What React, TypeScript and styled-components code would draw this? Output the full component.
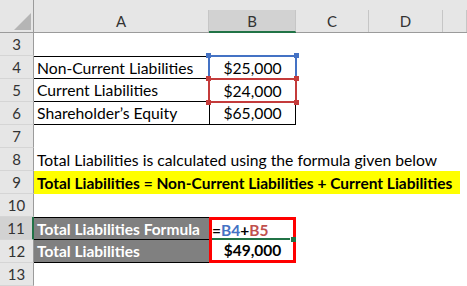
import styled, { createGlobalStyle } from 'styled-components';

const GlobalStyle = createGlobalStyle`
  html, body {
    margin: 0;
    padding: 0;
    background: #fff;
  }
  body {
    font-family: Lato, "Liberation Sans", sans-serif;
    overflow: hidden;
  }
`;

const Sheet = styled.div`
  display: grid;
  grid-template-columns: 34px 175px 87px 73px 74px 24px;
  grid-template-rows: 33px repeat(11, 23px);
  width: 467px;
  height: 286px;
  overflow: hidden;
  font-size: 15.7px;
  color: #000;
`;

const Corner = styled.div`
  background: #e6e6e6;
  border-bottom: 1px solid #9b9b9b;
  border-right: 1px solid #9b9b9b;
  display: flex;
  align-items: flex-end;
  justify-content: flex-end;
  padding: 0 2px 2px 0;
  box-sizing: border-box;
`;

const ColHeader = styled.div<{ $selected?: boolean }>`
  background: #e6e6e6;
  padding-top: 10px;
  box-sizing: border-box;
  border-bottom: 1px solid ${(p) => (p.$selected ? '#217346' : '#9b9b9b')};
`;

const ColLabel = styled.div<{ $selected?: boolean }>`
  height: 100%;
  box-sizing: border-box;
  display: flex;
  align-items: center;
  justify-content: center;
  font-size: 15px;
  color: #333;
  border-right: 1px solid #c6c6c6;
  background: ${(p) => (p.$selected ? '#d2d2d2' : 'transparent')};
  border-bottom: ${(p) => (p.$selected ? '1px solid #217346' : 'none')};
`;

const RowHeader = styled.div<{ $selected?: boolean }>`
  background: ${(p) => (p.$selected ? '#d2d2d2' : '#e6e6e6')};
  border-right: ${(p) => (p.$selected ? '2px solid #217346' : '1px solid #9b9b9b')};
  border-bottom: 1px solid #d5d5d5;
  box-sizing: border-box;
  display: flex;
  align-items: center;
  justify-content: center;
  font-size: 15px;
  color: #333;
`;

type CellProps = {
  $fill?: string;
  $bold?: boolean;
  $align?: 'left' | 'center';
  $ink?: string;
  $span?: number;
  $pad?: number;
  $bt?: string;
  $br?: string;
  $bb?: string;
  $bl?: string;
};

const Cell = styled.div<CellProps>`
  position: relative;
  box-sizing: border-box;
  display: flex;
  align-items: center;
  justify-content: ${(p) => (p.$align === 'center' ? 'center' : 'flex-start')};
  padding: 0 ${(p) => p.$pad ?? 3}px;
  white-space: nowrap;
  background: ${(p) => p.$fill || '#fff'};
  color: ${(p) => p.$ink || '#000'};
  font-weight: ${(p) => (p.$bold ? 700 : 400)};
  font-size: ${(p) => (p.$bold ? '15.5px' : 'inherit')};
  grid-column: span ${(p) => p.$span || 1};
  border-top: ${(p) => p.$bt || 'none'};
  border-right: ${(p) => p.$br || 'none'};
  border-bottom: ${(p) => p.$bb || 'none'};
  border-left: ${(p) => p.$bl || 'none'};
`;

const Banner = styled.div`
  width: 423px;
  margin-left: -3px;
  padding-left: 3px;
  height: 100%;
  display: flex;
  align-items: center;
  background: #ffff00;
  font-weight: 700;
  font-size: 15.5px;
`;

const RangeBox = styled.div<{ $color: string }>`
  position: absolute;
  z-index: 2;
  left: -1px;
  right: -1px;
  top: -1px;
  bottom: -1px;
  border: 2px solid ${(p) => p.$color};
  pointer-events: none;
`;

const Handle = styled.span<{ $color: string; $x: 'l' | 'r'; $y: 't' | 'b' }>`
  position: absolute;
  width: 5px;
  height: 5px;
  background: ${(p) => p.$color};
  ${(p) => (p.$x === 'l' ? 'left: -4px;' : 'right: -4px;')}
  ${(p) => (p.$y === 't' ? 'top: -4px;' : 'bottom: -4px;')}
`;

const ActiveLine = styled.div`
  position: absolute;
  left: 0;
  right: 3px;
  bottom: 0;
  height: 2px;
  background: #217346;
`;

const FillHandle = styled.span`
  position: absolute;
  z-index: 3;
  right: -3px;
  bottom: -2px;
  width: 5px;
  height: 5px;
  background: #217346;
`;

const Ref = styled.span<{ $ink: string }>`
  color: ${(p) => p.$ink};
`;

const BLACK = '1px solid #000';
const RED = '3px solid #ff0000';
const BLUE_RANGE = '#4472c4';
const RED_RANGE = '#c43b3b';

const columns = ['A', 'B', 'C', 'D', ''];

const Empty = ({ n }: { n: number }) => (
  <>
    {Array.from({ length: n }).map((_, i) => (
      <Cell key={i} />
    ))}
  </>
);

const App = () => {
  return (
    <>
      <GlobalStyle />
      <Sheet>
        <Corner>
          <svg width="17" height="17" viewBox="0 0 17 17">
            <polygon points="17,0 17,17 0,17" fill="#b5b5b5" />
          </svg>
        </Corner>
        {columns.map((c) => (
          <ColHeader key={c || 'E'} $selected={c === 'B'}>
            <ColLabel $selected={c === 'B'}>{c}</ColLabel>
          </ColHeader>
        ))}

        <RowHeader>3</RowHeader>
        <Empty n={5} />

        <RowHeader>4</RowHeader>
        <Cell $bt={BLACK} $bb={BLACK}>Non-Current Liabilities</Cell>
        <Cell $align="center">
          $25,000
          <RangeBox $color={BLUE_RANGE}>
            <Handle $color={BLUE_RANGE} $x="l" $y="t" />
            <Handle $color={BLUE_RANGE} $x="r" $y="t" />
          </RangeBox>
        </Cell>
        <Empty n={3} />

        <RowHeader>5</RowHeader>
        <Cell $bb={BLACK}>Current Liabilities</Cell>
        <Cell $align="center">
          $24,000
          <RangeBox $color={RED_RANGE}>
            <Handle $color={RED_RANGE} $x="l" $y="t" />
            <Handle $color={RED_RANGE} $x="r" $y="t" />
            <Handle $color={RED_RANGE} $x="l" $y="b" />
            <Handle $color={RED_RANGE} $x="r" $y="b" />
          </RangeBox>
        </Cell>
        <Empty n={3} />

        <RowHeader>6</RowHeader>
        <Cell $bb={BLACK}>Shareholder’s Equity</Cell>
        <Cell $align="center" $bl={BLACK} $br={BLACK} $bb={BLACK}>
          $65,000
        </Cell>
        <Empty n={3} />

        <RowHeader>7</RowHeader>
        <Empty n={5} />

        <RowHeader>8</RowHeader>
        <Cell $span={5}>Total Liabilities is calculated using the formula given below</Cell>

        <RowHeader>9</RowHeader>
        <Cell $span={5}>
          <Banner>Total Liabilities = Non-Current Liabilities + Current Liabilities</Banner>
        </Cell>

        <RowHeader>10</RowHeader>
        <Empty n={5} />

        <RowHeader $selected>11</RowHeader>
        <Cell $fill="#808080" $ink="#fff" $bold $bt={BLACK} $bb={BLACK}>
          Total Liabilities Formula
        </Cell>
        <Cell $bold $pad={0} $bt={RED} $bl={RED} $br={RED}>
          =<Ref $ink="#4472c4">B4</Ref>+<Ref $ink="#c0504d">B5</Ref>
          <ActiveLine />
          <FillHandle />
        </Cell>
        <Empty n={3} />

        <RowHeader>12</RowHeader>
        <Cell $fill="#808080" $ink="#fff" $bold $bb={BLACK}>
          Total Liabilities
        </Cell>
        <Cell $bold $align="center" $bl={RED} $br={RED} $bb={RED}>
          $49,000
        </Cell>
        <Empty n={3} />

        <RowHeader>13</RowHeader>
        <Empty n={5} />
      </Sheet>
    </>
  );
};

export default App;
